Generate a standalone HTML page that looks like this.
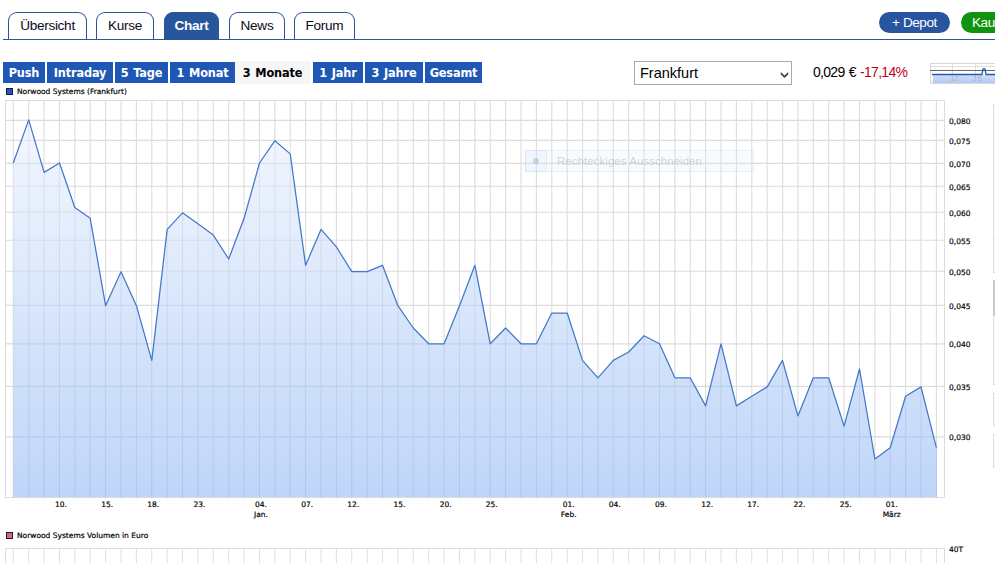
<!DOCTYPE html>
<html lang="de"><head><meta charset="utf-8"><title>Norwood Systems Chart</title>
<style>
html,body{margin:0;padding:0;background:#fff;}
body{width:995px;height:563px;overflow:hidden;position:relative;font-family:"Liberation Sans",sans-serif;}
.abs{position:absolute;}
.tabline{left:3px;top:39px;width:992px;height:1px;background:#2c559c;}
.tab{position:absolute;top:12px;height:27px;box-sizing:border-box;border:1px solid #2b5197;border-bottom:none;border-radius:9px 9px 0 0;font-size:13.6px;letter-spacing:-0.3px;line-height:25px;text-align:center;color:#0a0a20;background:#fff;}
.tab.act{background:#27569d;border-color:#27569d;color:#fff;font-weight:bold;}
.pill{position:absolute;top:12px;height:21px;border-radius:11px;color:#fff;font-size:13.6px;letter-spacing:-0.45px;line-height:21px;text-align:center;white-space:nowrap;}
.btn{position:absolute;top:62px;height:21px;background:#1e57b4;color:#fff;font-family:"DejaVu Sans Condensed","DejaVu Sans",sans-serif;font-weight:bold;font-size:12.6px;letter-spacing:-0.15px;word-spacing:1px;line-height:22.4px;text-align:center;white-space:nowrap;}
.btn.sel{top:61px;height:23px;line-height:24.4px;background:#f6f6f6;color:#000;}
.sel-box{position:absolute;left:634px;top:61px;width:158px;height:24px;box-sizing:border-box;border:1px solid #a6a9b1;background:#fff;font-size:14.5px;line-height:22px;padding-left:5px;color:#000;}
.quote{position:absolute;left:813px;top:62.5px;font-size:14px;letter-spacing:-0.7px;word-spacing:1px;line-height:18px;color:#000;white-space:nowrap;}
.quote span{color:#c00018;}
.leg{position:absolute;font-family:"DejaVu Sans",sans-serif;font-size:7.5px;line-height:10px;color:#000;white-space:nowrap;-webkit-text-stroke:0.18px #000;}
.sq{position:absolute;width:5px;height:5px;border:1px solid #1a1a40;}
svg text{font-family:"DejaVu Sans",sans-serif;font-size:7.5px;fill:#000;stroke:#000;stroke-width:0.18px;}
svg text.mini{font-family:"Liberation Sans",sans-serif;font-size:8px;fill:#b3b3bb;stroke:none;}
.rb{position:absolute;left:993px;width:3px;border:1px solid #dcdcdc;border-right:none;box-sizing:border-box;}
</style></head><body>
<div class="abs tabline"></div>
<div class="tab" style="left:8px;width:79px;">Übersicht</div>
<div class="tab" style="left:96px;width:58px;">Kurse</div>
<div class="tab act" style="left:164px;width:55px;">Chart</div>
<div class="tab" style="left:229px;width:56px;">News</div>
<div class="tab" style="left:294px;width:61px;">Forum</div>
<div class="pill" style="left:879px;width:71px;background:#27559f;">+ Depot</div>
<div class="pill" style="left:961px;width:60px;background:#0f940f;text-align:left;text-indent:11px;">Kaufen</div>

<div class="btn" style="left:3px;width:42px;">Push</div>
<div class="btn" style="left:47px;width:66px;">Intraday</div>
<div class="btn" style="left:115px;width:53px;">5 Tage</div>
<div class="btn" style="left:170px;width:65px;">1 Monat</div>
<div class="btn sel" style="left:235px;width:75px;">3 Monate</div>
<div class="btn" style="left:313px;width:50px;">1 Jahr</div>
<div class="btn" style="left:365px;width:58px;">3 Jahre</div>
<div class="btn" style="left:425px;width:57px;">Gesamt</div>

<div class="sel-box">Frankfurt
<svg class="abs" style="left:145px;top:9px" width="9" height="8" viewBox="0 0 9 8"><path d="M0.8 0.900L4.500 4.400L8.200 0.900V3.400L4.500 7L0.800 3.400Z" fill="#444"/></svg>
</div>
<div class="quote">0,029 € <span>-17,14%</span></div>

<svg class="abs" style="left:930px;top:62px" width="65" height="23" viewBox="0 0 65 23">
<defs><linearGradient id="mg" x1="0" y1="0" x2="0" y2="1"><stop offset="0" stop-color="#cfdffa"/><stop offset="1" stop-color="#b1c9f3"/></linearGradient></defs>
<path d="M0 4.500H65M22.500 1V21M45.500 1V21M0 19.500H65" stroke="#dedede" fill="none"/>
<rect x="3" y="13" width="70" height="8" fill="url(#mg)"/>
<path d="M22.500 13V21M45.500 13V21" stroke="#b9cdee" fill="none"/>
<rect x="0.500" y="1.500" width="70" height="20" fill="none" stroke="#d8d8d8"/>
<path d="M0 8.500H65" stroke="#666" fill="none"/>
<path d="M2 12.500H52L53 6.800H55L56 12.500H65" stroke="#2458b0" fill="none" stroke-width="1.300"/>
<text x="20" y="19.300" class="mini">12</text>
<text x="43" y="19.300" class="mini">16</text>
</svg>

<div class="sq" style="left:6px;top:88px;background:#1e57b4;"></div>
<div class="leg" style="left:17px;top:86.8px;">Norwood Systems (Frankfurt)</div>

<svg class="abs" style="left:0;top:0" width="995" height="563" viewBox="0 0 995 563">
<defs><linearGradient id="g" x1="0" y1="0" x2="0" y2="1"><stop offset="0" stop-color="#e9f0fd" stop-opacity="0.55"/><stop offset="1" stop-color="#8bb3f4" stop-opacity="0.55"/></linearGradient></defs>
<path d="M13.3 101V498.5M28.69 101V498.5M44.07 101V498.5M59.45 101V498.5M74.84 101V498.5M90.22 101V498.5M105.61 101V498.5M120.99 101V498.5M136.38 101V498.5M151.77 101V498.5M167.15 101V498.5M182.53 101V498.5M197.92 101V498.5M213.31 101V498.5M228.69 101V498.5M244.08 101V498.5M259.46 101V498.5M274.85 101V498.5M290.23 101V498.5M305.62 101V498.5M321.0 101V498.5M336.38 101V498.5M351.77 101V498.5M367.16 101V498.5M382.54 101V498.5M397.93 101V498.5M413.31 101V498.5M428.69 101V498.5M444.08 101V498.5M459.47 101V498.5M474.85 101V498.5M490.24 101V498.5M505.62 101V498.5M521.0 101V498.5M536.39 101V498.5M551.77 101V498.5M567.16 101V498.5M582.54 101V498.5M597.93 101V498.5M613.31 101V498.5M628.7 101V498.5M644.08 101V498.5M659.47 101V498.5M674.85 101V498.5M690.24 101V498.5M705.62 101V498.5M721.01 101V498.5M736.39 101V498.5M751.78 101V498.5M767.16 101V498.5M782.55 101V498.5M797.93 101V498.5M813.32 101V498.5M828.7 101V498.5M844.09 101V498.5M859.47 101V498.5M874.86 101V498.5M890.24 101V498.5M905.63 101V498.5M921.01 101V498.5M936.4 101V498.5M6 120.4H944M6 140.4H944M6 163.4H944M6 186.2H944M6 212.2H944M6 240.3H944M6 271.2H944M6 305.4H944M6 343.9H944M6 386.4H944M6 436.9H944" stroke="#dcdcdc" stroke-width="1.08" fill="none"/>
<rect x="5.5" y="100.5" width="939" height="397" fill="none" stroke="#dcdcdc"/>
<polygon points="13.3,497 13.3,163.0 28.7,119.9 44.1,172.4 59.5,163.0 74.8,207.5 90.2,218.3 105.6,305.7 121.0,271.7 136.4,305.7 151.8,360.4 167.2,229.4 182.5,212.8 197.9,223.8 213.3,235.1 228.7,259.0 244.1,218.3 259.5,163.0 274.9,140.7 290.2,153.9 305.6,265.3 321.0,229.4 336.4,246.9 351.8,271.7 367.2,271.7 382.5,265.3 397.9,305.7 413.3,328.0 428.7,343.8 444.1,343.8 459.5,305.7 474.9,265.3 490.2,343.8 505.6,328.0 521.0,343.8 536.4,343.8 551.8,313.0 567.2,313.0 582.5,360.4 597.9,377.8 613.3,360.4 628.7,352.0 644.1,335.8 659.5,343.8 674.9,377.8 690.2,377.8 705.6,405.9 721.0,343.8 736.4,405.9 751.8,396.3 767.2,386.9 782.5,360.4 797.9,415.9 813.3,377.8 828.7,377.8 844.1,426.1 859.5,369.0 874.9,459.0 890.2,447.7 905.6,396.3 921.0,386.9 936.4,447.7 937.0,447.7 937.0,497" fill="url(#g)"/>
<polyline points="13.3,163.0 28.7,119.9 44.1,172.4 59.5,163.0 74.8,207.5 90.2,218.3 105.6,305.7 121.0,271.7 136.4,305.7 151.8,360.4 167.2,229.4 182.5,212.8 197.9,223.8 213.3,235.1 228.7,259.0 244.1,218.3 259.5,163.0 274.9,140.7 290.2,153.9 305.6,265.3 321.0,229.4 336.4,246.9 351.8,271.7 367.2,271.7 382.5,265.3 397.9,305.7 413.3,328.0 428.7,343.8 444.1,343.8 459.5,305.7 474.9,265.3 490.2,343.8 505.6,328.0 521.0,343.8 536.4,343.8 551.8,313.0 567.2,313.0 582.5,360.4 597.9,377.8 613.3,360.4 628.7,352.0 644.1,335.8 659.5,343.8 674.9,377.8 690.2,377.8 705.6,405.9 721.0,343.8 736.4,405.9 751.8,396.3 767.2,386.9 782.5,360.4 797.9,415.9 813.3,377.8 828.7,377.8 844.1,426.1 859.5,369.0 874.9,459.0 890.2,447.7 905.6,396.3 921.0,386.9 936.4,447.7" fill="none" stroke="#4278c9" stroke-width="1.25" stroke-linejoin="round"/>
<g><text x="949" y="124.1">0,080</text><text x="949" y="144.0">0,075</text><text x="949" y="167.0">0,070</text><text x="949" y="189.7">0,065</text><text x="949" y="215.7">0,060</text><text x="949" y="243.7">0,055</text><text x="949" y="274.5">0,050</text><text x="949" y="308.7">0,045</text><text x="949" y="347.1">0,040</text><text x="949" y="389.5">0,035</text><text x="949" y="439.9">0,030</text></g>
<g><text x="61.0" y="507" text-anchor="middle">10.</text><text x="107.1" y="507" text-anchor="middle">15.</text><text x="153.3" y="507" text-anchor="middle">18.</text><text x="199.4" y="507" text-anchor="middle">23.</text><text x="261.0" y="507" text-anchor="middle">04.</text><text x="307.1" y="507" text-anchor="middle">07.</text><text x="353.3" y="507" text-anchor="middle">12.</text><text x="399.4" y="507" text-anchor="middle">15.</text><text x="445.6" y="507" text-anchor="middle">20.</text><text x="491.7" y="507" text-anchor="middle">25.</text><text x="568.7" y="507" text-anchor="middle">01.</text><text x="614.8" y="507" text-anchor="middle">04.</text><text x="661.0" y="507" text-anchor="middle">09.</text><text x="707.1" y="507" text-anchor="middle">12.</text><text x="753.3" y="507" text-anchor="middle">17.</text><text x="799.4" y="507" text-anchor="middle">22.</text><text x="845.6" y="507" text-anchor="middle">25.</text><text x="891.7" y="507" text-anchor="middle">01.</text><text x="261.0" y="517" text-anchor="middle">Jan.</text><text x="568.7" y="517" text-anchor="middle">Feb.</text><text x="891.7" y="517" text-anchor="middle">März</text></g>
<path d="M13.3 549V563M28.69 549V563M44.07 549V563M59.45 549V563M74.84 549V563M90.22 549V563M105.61 549V563M120.99 549V563M136.38 549V563M151.77 549V563M167.15 549V563M182.53 549V563M197.92 549V563M213.31 549V563M228.69 549V563M244.08 549V563M259.46 549V563M274.85 549V563M290.23 549V563M305.62 549V563M321.0 549V563M336.38 549V563M351.77 549V563M367.16 549V563M382.54 549V563M397.93 549V563M413.31 549V563M428.69 549V563M444.08 549V563M459.47 549V563M474.85 549V563M490.24 549V563M505.62 549V563M521.0 549V563M536.39 549V563M551.77 549V563M567.16 549V563M582.54 549V563M597.93 549V563M613.31 549V563M628.7 549V563M644.08 549V563M659.47 549V563M674.85 549V563M690.24 549V563M705.62 549V563M721.01 549V563M736.39 549V563M751.78 549V563M767.16 549V563M782.55 549V563M797.93 549V563M813.32 549V563M828.7 549V563M844.09 549V563M859.47 549V563M874.86 549V563M890.24 549V563M905.63 549V563M921.01 549V563M936.4 549V563" stroke="#dedede" stroke-width="1" fill="none"/>
<path d="M5.5 563V548.5H944.5V563" stroke="#dcdcdc" fill="none"/>
<text x="949" y="552">40T</text>
</svg>


<div class="abs" style="left:525px;top:150px;width:229px;height:22px;box-sizing:border-box;border:1px solid rgba(150,190,230,0.15);background:rgba(225,238,252,0.22);"></div>
<div class="abs" style="left:525px;top:150px;width:22px;height:22px;box-sizing:border-box;border:1px solid rgba(150,200,235,0.18);background:rgba(215,232,250,0.24);"></div>
<div class="abs" style="left:533px;top:158px;width:6px;height:6px;border-radius:3px;background:rgba(120,120,120,0.26);"></div>
<div class="abs" id="tip" style="left:557px;top:152px;font-size:11.6px;line-height:18px;color:rgba(110,95,95,0.27);white-space:nowrap;">Rechteckiges Ausschneiden</div>
<div class="sq" style="left:6px;top:532px;background:#e06868;"></div>
<div class="leg" style="left:17px;top:530.8px;">Norwood Systems Volumen in Euro</div>

<div class="rb" style="top:104px;height:169px;"></div>
<div class="abs" style="left:993px;top:138px;width:2px;height:1px;background:#dcdcdc"></div><div class="abs" style="left:993px;top:171px;width:2px;height:1px;background:#dcdcdc"></div><div class="abs" style="left:993px;top:205px;width:2px;height:1px;background:#dcdcdc"></div><div class="abs" style="left:993px;top:239px;width:2px;height:1px;background:#dcdcdc"></div>
<div class="rb" style="top:280px;height:105px;"></div>
<div class="abs" style="left:993px;top:350px;width:2px;height:1px;background:#dcdcdc"></div>
<div class="abs" style="left:993px;top:280px;width:2px;height:36px;background:#c9c9c9"></div>
<div class="rb" style="top:393px;height:33px;"></div>
<div class="rb" style="top:434px;height:34px;"></div>
</body></html>
